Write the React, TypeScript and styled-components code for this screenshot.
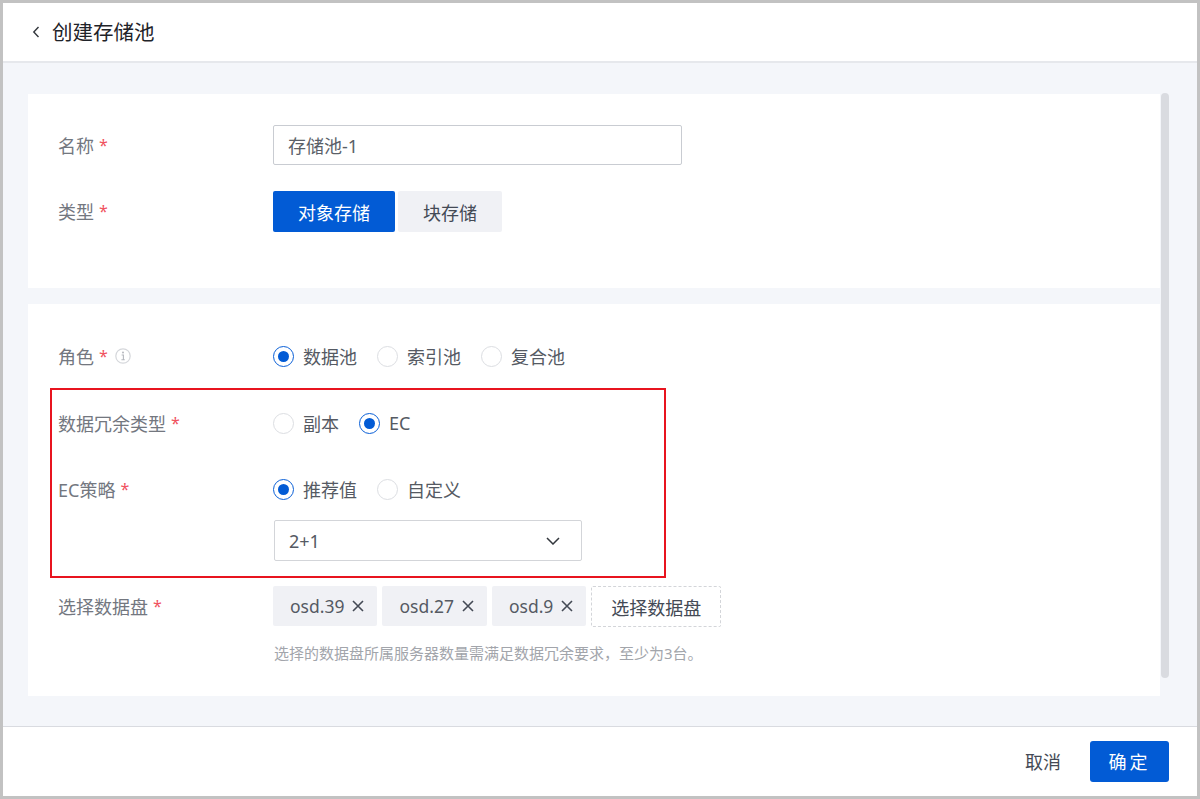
import React from "react";
import styled, { createGlobalStyle } from "styled-components";

const Global = createGlobalStyle`
  html, body { margin: 0; padding: 0; }
  body { font-family: "Noto Sans", "Noto Sans CJK SC", sans-serif; color: #444a55; }
`;

const Frame = styled.div`
  position: relative;
  box-sizing: border-box;
  width: 1200px;
  height: 799px;
  border: 3px solid #c2c2c2;
  display: flex;
  flex-direction: column;
  background: #f4f6fa;
  overflow: hidden;
`;
const Header = styled.header`
  flex: 0 0 60px;
  box-sizing: border-box;
  height: 60px;
  background: #fff;
  border-bottom: 2px solid #e6e8ec;
  display: flex;
  align-items: center;
  padding-left: 28px;
  gap: 11px;
`;
const Title = styled.h1`
  margin: 0;
  font-size: 20.5px;
  font-weight: 400;
  line-height: 28px;
  color: #1f2329;
`;
const Content = styled.main`
  position: relative;
  flex: 1;
  padding: 31px 0 0 25px;
  display: flex;
  flex-direction: column;
  gap: 16px;
  overflow: hidden;
`;
const Card = styled.section<{ $h: number; $pt: number }>`
  box-sizing: border-box;
  width: 1132px;
  height: ${(p) => p.$h}px;
  padding: ${(p) => p.$pt}px 0 0 30px;
  background: #fff;
  flex: none;
`;
const Row = styled.div<{ $mt?: number }>`
  display: flex;
  align-items: flex-start;
  margin-top: ${(p) => p.$mt ?? 0}px;
`;
const Label = styled.div`
  width: 215px;
  height: 40px;
  flex: none;
  display: flex;
  align-items: center;
  font-size: 18px;
  color: #73777f;
`;
const Star = styled.span`
  color: #f0525f;
  margin-left: 5px;
  font-size: 16px;
`;
const Control = styled.div`
  display: flex;
  flex-direction: column;
`;
const TextInput = styled.div`
  box-sizing: border-box;
  width: 409px;
  height: 40px;
  border: 1px solid #c9ccd2;
  border-radius: 2px;
  padding-left: 14px;
  display: flex;
  align-items: center;
  font-size: 18px;
  color: #5a5f68;
  background: #fff;
`;
const Segments = styled.div`
  display: flex;
  gap: 3px;
`;
const Segment = styled.button<{ $active?: boolean }>`
  height: 41px;
  border: 0;
  border-radius: 2px;
  padding: 0 25px;
  font: inherit;
  font-size: 18px;
  background: ${(p) => (p.$active ? "#025bd5" : "#f0f1f5")};
  color: ${(p) => (p.$active ? "#fff" : "#444a55")};
`;
const RadioGroup = styled.div`
  display: flex;
  align-items: center;
  height: 40px;
  gap: 20px;
`;
const RadioItem = styled.label`
  display: flex;
  align-items: center;
  gap: 9px;
  font-size: 18px;
  color: #555a63;
`;
const RadioDot = styled.span<{ $on?: boolean }>`
  box-sizing: border-box;
  width: 21px;
  height: 21px;
  border-radius: 50%;
  border: 1px solid ${(p) => (p.$on ? "#0a5fd7" : "#dcdee2")};
  background: #fff;
  display: flex;
  align-items: center;
  justify-content: center;
  &::after {
    content: "";
    display: ${(p) => (p.$on ? "block" : "none")};
    width: 11px;
    height: 11px;
    border-radius: 50%;
    background: #025bd5;
  }
`;
const Select = styled.div`
  box-sizing: border-box;
  width: 308px;
  height: 41px;
  margin: 11px 0 0 1px;
  border: 1px solid #d3d5d9;
  border-radius: 2px;
  padding: 0 21px 0 14px;
  display: flex;
  align-items: center;
  justify-content: space-between;
  font-size: 18px;
  color: #555a63;
  background: #fff;
`;
const Tags = styled.div`
  display: flex;
  gap: 5px;
`;
const Tag = styled.div`
  height: 40px;
  box-sizing: border-box;
  padding: 0 13px 0 17px;
  display: flex;
  align-items: center;
  gap: 8px;
  background: #f0f1f5;
  border-radius: 2px;
  font-size: 17.5px;
  color: #555a63;
`;
const AddButton = styled.button`
  height: 41px;
  margin-left: 0;
  padding: 0 19px;
  font: inherit;
  font-size: 18px;
  color: #444a55;
  background: #fff;
  border: 1px dashed #d3d5d9;
  border-radius: 2px;
`;
const Hint = styled.div`
  margin: 14px 0 0 1px;
  font-size: 15px;
  line-height: 24px;
  color: #a2a5ab;
`;
const Scrollbar = styled.div`
  position: absolute;
  left: 1158px;
  top: 30px;
  width: 8px;
  height: 585px;
  border-radius: 4px;
  background: #d9dbe0;
`;
const Footer = styled.footer`
  flex: 0 0 70px;
  box-sizing: border-box;
  height: 70px;
  background: #fff;
  border-top: 1px solid #d9dbe0;
  display: flex;
  align-items: center;
  justify-content: flex-end;
  padding: 0 28px 1px 0;
  gap: 29px;
`;
const Cancel = styled.button`
  border: 0;
  background: none;
  padding: 0;
  font: inherit;
  font-size: 18px;
  color: #444a55;
`;
const Confirm = styled.button`
  width: 79px;
  height: 41px;
  border: 0;
  border-radius: 3px;
  background: #025bd5;
  color: #fff;
  font: inherit;
  font-size: 18px;
  letter-spacing: 3px;
`;
const Annotation = styled.div`
  position: absolute;
  left: 47px;
  top: 385px;
  width: 616px;
  height: 190px;
  box-sizing: border-box;
  border: 2px solid #e8141f;
  pointer-events: none;
`;
const InfoIcon = styled.svg`
  margin-left: 7px;
  flex: none;
`;

const Back = () => (
  <svg width="10" height="14" viewBox="0 0 10 14" fill="none" stroke="#33373d" strokeWidth="1.4">
    <path d="M7.5 2 L2.8 7 L7.5 12" />
  </svg>
);
const Close = () => (
  <svg width="12" height="12" viewBox="0 0 12 12" fill="none" stroke="#444a55" strokeWidth="1.6">
    <path d="M1 1 L11 11 M11 1 L1 11" />
  </svg>
);
const Chevron = () => (
  <svg width="14" height="8" viewBox="0 0 14 8" fill="none" stroke="#33373d" strokeWidth="1.5">
    <path d="M1 1 L7 7 L13 1" />
  </svg>
);
const Info = () => (
  <InfoIcon width="16" height="16" viewBox="0 0 16 16" fill="none">
    <circle cx="8" cy="8" r="7.2" stroke="#d5d7db" strokeWidth="1.2" />
    <circle cx="8" cy="4.6" r="1" fill="#b5b8be" />
    <path d="M6.6 7 H8.4 V11.6 M6.4 11.8 H9.8" stroke="#b5b8be" strokeWidth="1.1" />
  </InfoIcon>
);

const Radio = ({ on, children }: { on?: boolean; children: React.ReactNode }) => (
  <RadioItem>
    <RadioDot $on={on} />
    {children}
  </RadioItem>
);

export default function App() {
  return (
    <Frame>
      <Global />
      <Header>
        <Back />
        <Title>创建存储池</Title>
      </Header>
      <Content>
        <Card $h={194} $pt={31}>
          <Row>
            <Label>名称<Star>*</Star></Label>
            <TextInput>存储池-1</TextInput>
          </Row>
          <Row $mt={26}>
            <Label>类型<Star>*</Star></Label>
            <Segments>
              <Segment $active>对象存储</Segment>
              <Segment>块存储</Segment>
            </Segments>
          </Row>
        </Card>
        <Card $h={392} $pt={32}>
          <Row>
            <Label>角色<Star>*</Star><Info /></Label>
            <RadioGroup>
              <Radio on>数据池</Radio>
              <Radio>索引池</Radio>
              <Radio>复合池</Radio>
            </RadioGroup>
          </Row>
          <Row $mt={27}>
            <Label>数据冗余类型<Star>*</Star></Label>
            <RadioGroup>
              <Radio>副本</Radio>
              <Radio on>EC</Radio>
            </RadioGroup>
          </Row>
          <Row $mt={26}>
            <Label>EC策略<Star>*</Star></Label>
            <Control>
              <RadioGroup>
                <Radio on>推荐值</Radio>
                <Radio>自定义</Radio>
              </RadioGroup>
              <Select>
                2+1
                <Chevron />
              </Select>
            </Control>
          </Row>
          <Row $mt={25}>
            <Label>选择数据盘<Star>*</Star></Label>
            <Control>
              <Tags>
                <Tag>osd.39<Close /></Tag>
                <Tag>osd.27<Close /></Tag>
                <Tag>osd.9<Close /></Tag>
                <AddButton>选择数据盘</AddButton>
              </Tags>
              <Hint>选择的数据盘所属服务器数量需满足数据冗余要求，至少为3台。</Hint>
            </Control>
          </Row>
        </Card>
        <Scrollbar />
      </Content>
      <Footer>
        <Cancel>取消</Cancel>
        <Confirm>确定</Confirm>
      </Footer>
      <Annotation />
    </Frame>
  );
}
